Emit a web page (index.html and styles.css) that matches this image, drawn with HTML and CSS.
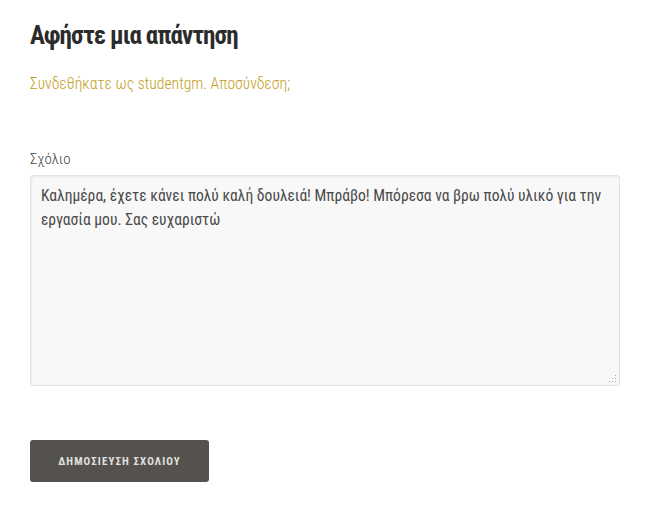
FILE: index.html
```html
<!DOCTYPE html>
<html lang="el">
<head>
<meta charset="utf-8">
<link rel="stylesheet" href="styles.css">
</head>
<body>
<div class="respond">
  <h3 class="reply-title">Αφήστε μια απάντηση</h3>
  <p class="logged-in">Συνδεθήκατε ως studentgm. Αποσύνδεση;</p>
  <div class="field">
    <label class="label" for="c">Σχόλιο</label>
    <div class="comment-wrap">
      <textarea id="c" class="comment">Καλημέρα, έχετε κάνει πολύ καλή δουλειά! Μπράβο! Μπόρεσα να βρω πολύ υλικό για την εργασία μου. Σας ευχαριστώ</textarea>
      <svg class="grip" width="9" height="9" viewBox="0 0 9 9" aria-hidden="true">
        <rect x="7" y="1" width="1" height="1"/>
        <rect x="7" y="4" width="1" height="1"/>
        <rect x="4" y="4" width="1" height="1"/>
        <rect x="7" y="7" width="1" height="1"/>
        <rect x="4" y="7" width="1" height="1"/>
        <rect x="1" y="7" width="1" height="1"/>
      </svg>
    </div>
  </div>
  <div class="actions">
    <button class="submit">Δημοσιευση σχολιου</button>
  </div>
</div>
</body>
</html>
```
FILE: styles.css
```css
html, body {
  margin: 0;
  padding: 0;
  background: #ffffff;
}
body {
  font-family: "Roboto", "Liberation Sans", sans-serif;
  font-stretch: condensed;
}
.respond {
  padding: 20px 30px 0 30px;
  width: 590px;
  display: flex;
  flex-direction: column;
}
.reply-title {
  margin: 0;
  font-size: 25px;
  line-height: 32px;
  font-weight: 700;
  color: #2b2b2b;
  letter-spacing: -0.9px;
}
.logged-in {
  margin: 22px 0 0 0;
  font-size: 15.7px;
  line-height: 20px;
  font-weight: 300;
  color: #c29e1c;
}
.field {
  margin-top: 55px;
  display: flex;
  flex-direction: column;
}
.label {
  font-size: 15px;
  line-height: 20px;
  font-weight: 300;
  color: #444;
  margin-bottom: 6px;
}
.comment-wrap {
  position: relative;
  width: 590px;
  height: 211px;
}
.comment {
  display: block;
  box-sizing: border-box;
  width: 590px;
  height: 211px;
  margin: 0;
  padding: 8px 10px;
  background: #f8f8f8;
  border: 1px solid #e3e3e3;
  border-radius: 3px;
  box-shadow: inset 1px 1px 2px rgba(0,0,0,0.06);
  font-family: "Roboto", "Liberation Sans", sans-serif;
  font-stretch: condensed;
  font-size: 15.6px;
  line-height: 24px;
  color: #4a4a4a;
  resize: none;
  outline: none;
}
.grip {
  position: absolute;
  right: 3px;
  bottom: 3px;
  fill: #a8a8a8;
}
.actions {
  margin-top: 54px;
}
.submit {
  width: 179px;
  height: 42px;
  border: 0;
  border-radius: 3px;
  background: #55524d;
  color: #e0e0e0;
  font-family: "Roboto", "Liberation Sans", sans-serif;
  font-stretch: condensed;
  font-weight: 700;
  font-size: 11px;
  letter-spacing: 1.1px;
  text-transform: uppercase;
}
```
